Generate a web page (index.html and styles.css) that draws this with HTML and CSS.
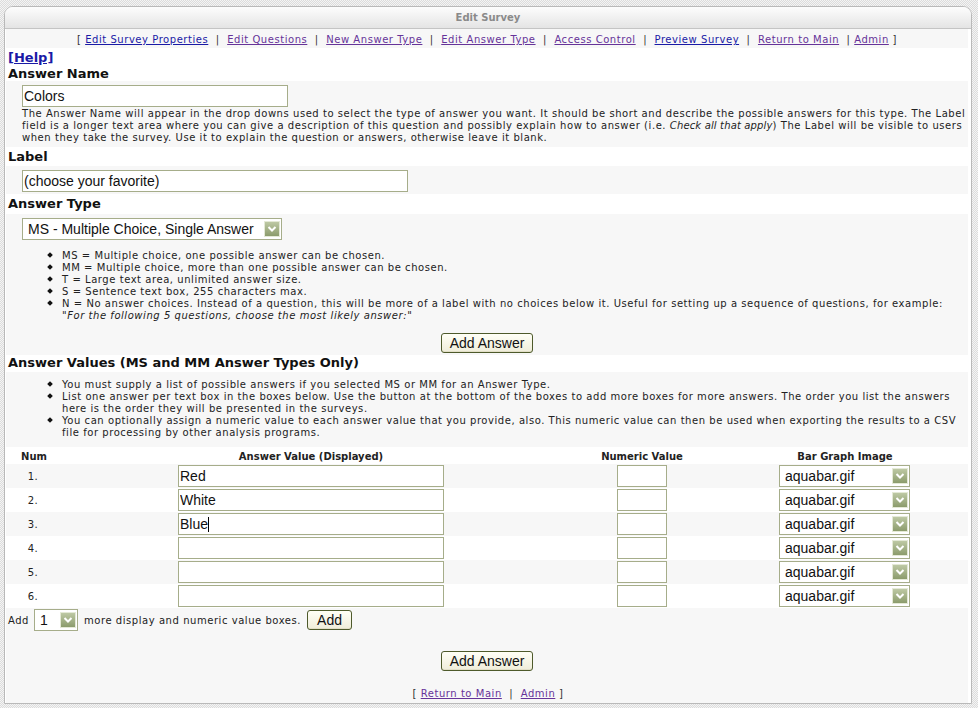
FILE: index.html
```html
<!DOCTYPE html>
<html>
<head>
<meta charset="utf-8">
<title>Edit Survey</title>
<link rel="stylesheet" href="styles.css">
</head>
<body>
<div class="panel">
  <div class="titlebar">Edit Survey</div>
  <div class="nav">[ <a href="#" class="new">Edit Survey Properties</a> &nbsp;|&nbsp; <a href="#">Edit Questions</a> &nbsp;|&nbsp; <a href="#">New Answer Type</a> &nbsp;|&nbsp; <a href="#">Edit Answer Type</a> &nbsp;|&nbsp; <a href="#">Access Control</a> &nbsp;|&nbsp; <a href="#" class="new">Preview Survey</a> &nbsp;|&nbsp; <a href="#">Return to Main</a> &nbsp;| <a href="#">Admin</a> ]</div>

  <div class="white top-block">
    <a href="#" class="help">[Help]</a>
    <div class="heading">Answer Name</div>
  </div>
  <div class="gray field-block name-block">
    <input class="text name-input" type="text" value="Colors">
    <p class="desc">The Answer Name will appear in the drop downs used to select the type of answer you want. It should be short and describe the possible answers for this type. The Label field is a longer text area where you can give a description of this question and possibly explain how to answer (i.e. <i class="tight">Check all that apply</i>) The Label will be visible to users when they take the survey. Use it to explain the question or answers, otherwise leave it blank.</p>
  </div>

  <div class="white heading h-label">Label</div>
  <div class="gray field-block label-block">
    <input class="text label-input" type="text" value="(choose your favorite)">
  </div>

  <div class="white heading h-type">Answer Type</div>
  <div class="gray field-block type-block">
    <span class="sel type-sel">
      <select><option>MS - Multiple Choice, Single Answer</option></select>
      <svg class="arrow" width="16" height="16" viewBox="0 0 16 16"><defs><linearGradient id="g1" x1="0" y1="0" x2="0" y2="1"><stop offset="0" stop-color="#bfcaa6"/><stop offset="1" stop-color="#8a9a6a"/></linearGradient></defs><rect x="0.5" y="0.5" width="15" height="15" fill="url(#g1)" stroke="#e4e9d6"/><polyline points="4.5,6 8,9.5 11.5,6" fill="none" stroke="#fff" stroke-width="2"/></svg>
    </span>
    <ul class="bullets type-list">
      <li>MS = Multiple choice, one possible answer can be chosen.</li>
      <li>MM = Multiple choice, more than one possible answer can be chosen.</li>
      <li>T = Large text area, unlimited answer size.</li>
      <li>S = Sentence text box, 255 characters max.</li>
      <li>N = No answer choices. Instead of a question, this will be more of a label with no choices below it. Useful for setting up a sequence of questions, for example:<br>"<i>For the following 5 questions, choose the most likely answer:</i>"</li>
    </ul>
    <div class="btn-line"><button class="btn">Add Answer</button></div>
  </div>

  <div class="white heading h-values">Answer Values (MS and MM Answer Types Only)</div>
  <div class="gray field-block values-block">
    <ul class="bullets">
      <li>You must supply a list of possible answers if you selected MS or MM for an Answer Type.</li>
      <li>List one answer per text box in the boxes below. Use the button at the bottom of the boxes to add more boxes for more answers. The order you list the answers here is the order they will be presented in the surveys.</li>
      <li>You can optionally assign a numeric value to each answer value that you provide, also. This numeric value can then be used when exporting the results to a CSV file for processing by other analysis programs.</li>
    </ul>
  </div>

  <div class="grid-row head-row white">
    <div>Num</div><div>Answer Value (Displayed)</div><div>Numeric Value</div><div>Bar Graph Image</div>
  </div>
  <div class="grid-row gray"><div class="num">1.</div><div><input class="text val" value="Red"></div><div><input class="text numv"></div><div><span class="sel img-sel"><select><option>aquabar.gif</option></select><svg class="arrow" width="16" height="16" viewBox="0 0 16 16"><defs><linearGradient id="g2" x1="0" y1="0" x2="0" y2="1"><stop offset="0" stop-color="#bfcaa6"/><stop offset="1" stop-color="#8a9a6a"/></linearGradient></defs><rect x="0.5" y="0.5" width="15" height="15" fill="url(#g2)" stroke="#e4e9d6"/><polyline points="4.5,6 8,9.5 11.5,6" fill="none" stroke="#fff" stroke-width="2"/></svg></span></div></div>
  <div class="grid-row white"><div class="num">2.</div><div><input class="text val" value="White"></div><div><input class="text numv"></div><div><span class="sel img-sel"><select><option>aquabar.gif</option></select><svg class="arrow" width="16" height="16" viewBox="0 0 16 16"><rect x="0.5" y="0.5" width="15" height="15" fill="url(#g2)" stroke="#e4e9d6"/><polyline points="4.5,6 8,9.5 11.5,6" fill="none" stroke="#fff" stroke-width="2"/></svg></span></div></div>
  <div class="grid-row gray"><div class="num">3.</div><div><span class="caret-wrap"><input class="text val" value="Blue"><span class="caret"></span></span></div><div><input class="text numv"></div><div><span class="sel img-sel"><select><option>aquabar.gif</option></select><svg class="arrow" width="16" height="16" viewBox="0 0 16 16"><rect x="0.5" y="0.5" width="15" height="15" fill="url(#g2)" stroke="#e4e9d6"/><polyline points="4.5,6 8,9.5 11.5,6" fill="none" stroke="#fff" stroke-width="2"/></svg></span></div></div>
  <div class="grid-row white"><div class="num">4.</div><div><input class="text val"></div><div><input class="text numv"></div><div><span class="sel img-sel"><select><option>aquabar.gif</option></select><svg class="arrow" width="16" height="16" viewBox="0 0 16 16"><rect x="0.5" y="0.5" width="15" height="15" fill="url(#g2)" stroke="#e4e9d6"/><polyline points="4.5,6 8,9.5 11.5,6" fill="none" stroke="#fff" stroke-width="2"/></svg></span></div></div>
  <div class="grid-row gray"><div class="num">5.</div><div><input class="text val"></div><div><input class="text numv"></div><div><span class="sel img-sel"><select><option>aquabar.gif</option></select><svg class="arrow" width="16" height="16" viewBox="0 0 16 16"><rect x="0.5" y="0.5" width="15" height="15" fill="url(#g2)" stroke="#e4e9d6"/><polyline points="4.5,6 8,9.5 11.5,6" fill="none" stroke="#fff" stroke-width="2"/></svg></span></div></div>
  <div class="grid-row white"><div class="num">6.</div><div><input class="text val"></div><div><input class="text numv"></div><div><span class="sel img-sel"><select><option>aquabar.gif</option></select><svg class="arrow" width="16" height="16" viewBox="0 0 16 16"><rect x="0.5" y="0.5" width="15" height="15" fill="url(#g2)" stroke="#e4e9d6"/><polyline points="4.5,6 8,9.5 11.5,6" fill="none" stroke="#fff" stroke-width="2"/></svg></span></div></div>

  <div class="gray bottom-block">
    <div class="add-row">
      <span>Add</span>
      <span class="sel count-sel"><select><option>1</option></select><svg class="arrow" width="16" height="16" viewBox="0 0 16 16"><rect x="0.5" y="0.5" width="15" height="15" fill="url(#g2)" stroke="#e4e9d6"/><polyline points="4.5,6 8,9.5 11.5,6" fill="none" stroke="#fff" stroke-width="2"/></svg></span>
      <span>more display and numeric value boxes.</span>
      <button class="btn small">Add</button>
    </div>
    <div class="btn-line last-btn"><button class="btn">Add Answer</button></div>
    <div class="footer">[ <a href="#">Return to Main</a> &nbsp;|&nbsp; <a href="#">Admin</a> ]</div>
  </div>
</div>
</body>
</html>
```

FILE: styles.css
```css
html, body {
  margin: 0;
  padding: 0;
}
body {
  height: 708px;
  overflow: hidden;
  font-family: "DejaVu Sans", Verdana, sans-serif;
  font-size: 10px;
  letter-spacing: 0.55px;
  color: #222;
  background: repeating-conic-gradient(#dcdcdc 0 25%, #f4f4f4 0 50%) 0 0 / 2px 2px;
  padding-top: 6px;
  box-sizing: border-box;
}
a {
  color: #663399;
}
a.new {
  color: #1a1aa6;
}
.panel {
  margin-left: 4px;
  width: 968px;
  box-sizing: border-box;
  border: 1px solid #b9b9b9;
  border-radius: 9px 9px 0 0;
  background: #fff;
  padding: 0 3px 0 1px;
  height: 698px;
  display: flex;
  flex-direction: column;
}
.titlebar {
  margin: 0 -3px 0 -1px;
  height: 21px;
  border-bottom: 1px solid #c4c4c4;
  border-radius: 8px 8px 0 0;
  background: linear-gradient(#fdfdfd, #e4e4e4);
  text-align: center;
  font-weight: bold;
  letter-spacing: 0;
  color: #8a8a8a;
  line-height: 21px;
}
.nav {
  height: 19px;
  line-height: 16px;
  padding-top: 3px;
  box-sizing: border-box;
  text-align: center;
  background: #f7f7f7;
  color: #333;
  white-space: nowrap;
}
.white {
  background: #fff;
}
.gray {
  background: #f7f7f7;
}
.top-block {
  padding: 2px 2px 0;
  height: 33px;
  box-sizing: border-box;
}
.help {
  display: block;
  font-weight: bold;
  font-size: 13px;
  letter-spacing: 0;
  line-height: 16px;
  color: #1a1aa6;
  width: max-content;
}
.heading {
  font-weight: bold;
  font-size: 13px;
  letter-spacing: 0;
  color: #111;
  line-height: 15px;
  padding-left: 2px;
}
.top-block .heading {
  padding-left: 0;
}
.h-label {
  height: 19px;
  line-height: 19px;
}
.h-type {
  height: 20px;
  line-height: 20px;
}
.h-values {
  height: 17px;
  line-height: 16px;
}
.field-block {
  padding-left: 16px;
}
.name-block {
  padding-top: 4px;
  padding-bottom: 3px;
}
.label-block {
  padding-top: 4px;
  padding-bottom: 2px;
  height: 28px;
  box-sizing: border-box;
}
.type-block {
  padding-top: 4px;
  padding-bottom: 2px;
}
.values-block {
  padding-top: 7px;
  padding-bottom: 8px;
}
input.text {
  display: block;
  box-sizing: border-box;
  height: 22px;
  border: 1px solid #a6ad8a;
  background: #fff;
  font-family: "Liberation Sans", Arial, sans-serif;
  font-size: 14px;
  letter-spacing: 0;
  padding: 0 1px;
  margin: 0;
  color: #111;
  outline: none;
}
.name-input {
  width: 266px;
}
.label-input {
  width: 386px;
}
.desc {
  margin: 1px 0 0;
  line-height: 12px;
}
.desc .tight {
  letter-spacing: 0.15px;
}
.sel {
  position: relative;
  display: inline-block;
  vertical-align: middle;
}
.sel select {
  appearance: none;
  -webkit-appearance: none;
  display: block;
  box-sizing: border-box;
  height: 22px;
  border: 1px solid #a6ad8a;
  border-radius: 0;
  background: #fff;
  font-family: "Liberation Sans", Arial, sans-serif;
  font-size: 14px;
  letter-spacing: 0;
  color: #111;
  padding: 0 20px 0 5px;
  margin: 0;
}
.sel .arrow {
  position: absolute;
  right: 2px;
  top: 3px;
  pointer-events: none;
}
.type-sel select {
  width: 260px;
}
.img-sel select {
  width: 131px;
  padding-left: 5px;
}
.count-sel select {
  width: 44px;
  padding-left: 5px;
}
.bullets {
  list-style: none;
  margin: 0;
  padding: 0 0 0 40px;
  line-height: 12px;
}
.type-list {
  margin-top: 10px;
}
.bullets li {
  position: relative;
}
.bullets li::before {
  content: "";
  position: absolute;
  left: -14px;
  top: 3px;
  width: 4px;
  height: 4px;
  background: #111;
  transform: rotate(45deg);
}
.btn-line {
  text-align: center;
  margin-top: 11px;
  padding-right: 16px;
}
.btn {
  font-family: "Liberation Sans", Arial, sans-serif;
  font-size: 14px;
  letter-spacing: 0;
  color: #111;
  height: 20px;
  width: 92px;
  padding: 0;
  border: 1px solid #4e5a2b;
  border-radius: 3px;
  background: linear-gradient(#fffff6, #efedda);
  line-height: 18px;
  box-shadow: inset 0 -1px 0 #e2dfc7;
}
.btn.small {
  width: 45px;
}
.grid-row {
  display: grid;
  grid-template-columns: 52px 502px 160px 1fr;
  align-items: center;
  padding-left: 2px;
  height: 24px;
}
.grid-row > div {
  display: flex;
  justify-content: center;
}
.head-row {
  height: 17px;
  font-weight: bold;
  letter-spacing: 0;
  line-height: 17px;
  padding-top: 1px;
  box-sizing: border-box;
}
.num {
  padding-right: 2px;
}
input.val {
  width: 266px;
}
input.numv {
  width: 50px;
}
.img-sel {
  margin-left: -1px;
}
.caret-wrap {
  position: relative;
  display: block;
}
.caret {
  position: absolute;
  left: 30px;
  top: 4px;
  width: 1px;
  height: 15px;
  background: #000;
}
.bottom-block {
  flex: 1;
  padding-left: 2px;
}
.add-row {
  height: 24px;
  display: flex;
  align-items: center;
}
.add-row .count-sel {
  margin: 0 6px 0 5px;
}
.add-row .btn {
  margin-left: 6px;
}
.last-btn {
  margin-top: 19px;
  padding-right: 2px;
}
.footer {
  text-align: center;
  margin-top: 17px;
  line-height: 12px;
  color: #333;
}
```
